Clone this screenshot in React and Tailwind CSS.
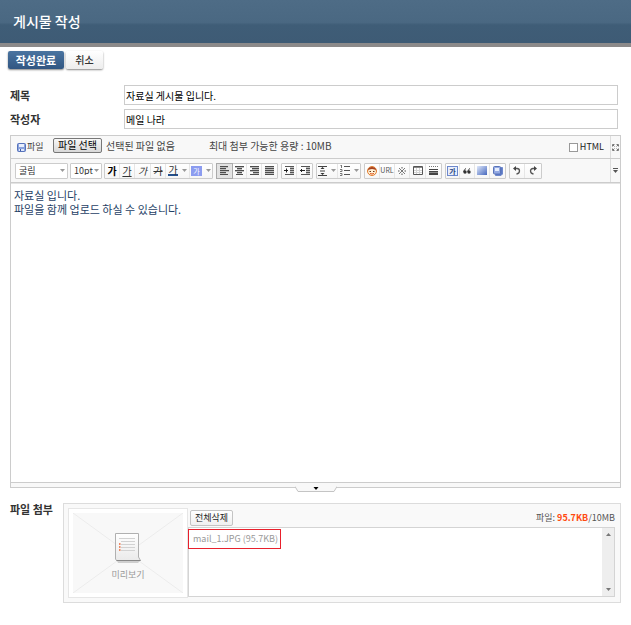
import React from "react";

const bar = (x1, y1, x2, y2, key) => (
  <path key={key} d={`M${x1} ${y1}H${x2}V${y2}H${x1}Z`} />
);

function Icon({ children, w = 12, h = 11 }) {
  return (
    <svg width={w} height={h} viewBox={`0 0 ${w} ${h}`} fill="none" aria-hidden="true" className="shrink-0">
      {children}
    </svg>
  );
}

function AlignIcon({ rows }) {
  return (
    <Icon w={9} h={9}>
      <g fill="#bdbdbd">{rows.slice(0, 4).map(([a, b], i) => bar(a, i * 2 + 1, b, i * 2 + 2, i))}</g>
      <g fill="#4d4d4d">{rows.map(([a, b], i) => bar(a, i * 2, b, i * 2 + 1, i))}</g>
    </Icon>
  );
}

function Caret() {
  return (
    <svg width="5" height="3" viewBox="0 0 5 3" aria-hidden="true" className="shrink-0">
      <path d="M0 0H5L2.5 3Z" fill="#999" />
    </svg>
  );
}

function Group({ children }) {
  return (
    <div className="flex h-4 shrink-0 divide-x divide-[#e6e6e6] rounded-[1px] border border-[#cccccc] bg-linear-to-b from-white to-[#f6f6f6]">
      {children}
    </div>
  );
}

function Tool({ label, width = "w-[15px]", pressed = false, children }) {
  return (
    <button
      type="button"
      aria-label={label}
      aria-pressed={pressed}
      className={`flex shrink-0 items-center justify-center gap-1 text-[10px] leading-none text-[#333] ${width} ${
        pressed ? "bg-[#e2e2e2] outline outline-[#aaa]" : ""
      }`}
    >
      {children}
    </button>
  );
}

function Picker({ label, options, width }) {
  return (
    <div className={`relative h-4 shrink-0 ${width}`}>
      <select
        aria-label={label}
        className="block h-4 w-full appearance-none rounded-[1px] border border-[#cccccc] bg-white pl-[3px] text-[9px] leading-none text-[#333]"
      >
        {options.map((o) => (
          <option key={o}>{o}</option>
        ))}
      </select>
      <span className="pointer-events-none absolute top-1.5 right-[3px]">
        <Caret />
      </span>
    </div>
  );
}

function Field({ id, label, value }) {
  return (
    <div className="flex items-center">
      <label htmlFor={id} className="w-[114px] shrink-0 text-[11px] leading-5 font-bold text-[#333]">
        {label}
      </label>
      <input
        id={id}
        defaultValue={value}
        className="h-5 min-w-0 flex-1 border border-[#cccccc] bg-white px-px text-[10px] text-black"
      />
    </div>
  );
}

function DiskIcon() {
  return (
    <Icon w={9} h={9}>
      <rect x=".5" y=".5" width="8" height="8" rx="1" fill="#8ba3dd" stroke="#5673bb" />
      <path d="M2 1H7V4H2Z" fill="#e9effd" />
      <path d="M2 6H7V8H2Z" fill="#dfe7fa" />
      <path d="M3 6H4V8H3Z" fill="#3f5ba5" />
    </Icon>
  );
}

function Toolbar() {
  return (
    <div className="flex min-w-0 flex-1 items-center gap-[3px] overflow-hidden pl-1">
      <div className="flex gap-0.5">
        <Picker label="글꼴" options={["굴림", "돋움"]} width="w-[53px]" />
        <Picker label="글자 크기" options={["10pt", "12pt"]} width="w-8" />
        <Group>
          <Tool label="굵게">
            <b className="text-black">가</b>
          </Tool>
          <Tool label="밑줄">
            <span className="underline">가</span>
          </Tool>
          <Tool label="기울임" width="w-4">
            <i>가</i>
          </Tool>
          <Tool label="취소선">
            <span className="line-through">가</span>
          </Tool>
          <Tool label="글자색" width="w-6">
            <span className="border-b-2 border-[#24508c] leading-[9px]">가</span>
            <Caret />
          </Tool>
          <Tool label="배경색" width="w-[22px]">
            <span className="bg-[#8c9cf0] px-0.5 text-[7px] leading-[10px] text-white">가</span>
            <Caret />
          </Tool>
        </Group>
      </div>
      <Group>
        <Tool label="왼쪽 정렬" pressed>
          <AlignIcon rows={[[0, 8], [0, 6], [0, 9], [0, 6], [0, 8]]} />
        </Tool>
        <Tool label="가운데 정렬">
          <AlignIcon rows={[[0, 9], [2, 7], [0, 9], [2, 7], [1, 8]]} />
        </Tool>
        <Tool label="오른쪽 정렬">
          <AlignIcon rows={[[0, 9], [2, 9], [0, 9], [3, 9], [0, 9]]} />
        </Tool>
        <Tool label="양쪽 정렬">
          <AlignIcon rows={[[0, 9], [0, 9], [0, 9], [0, 9], [0, 9]]} />
        </Tool>
      </Group>
      <Group>
        <Tool label="들여쓰기">
          <Icon w={10} h={9}>
            <path d="M6 1H10V8H6Z" fill="#bdbdbd" />
            <path d="M1 .5H10M6 2.5H10M6 4.5H10M6 6.5H10M1 8.5H10" stroke="#555" />
            <path d="M0 4.5H4M2.5 2.5V6.5" stroke="#222" />
          </Icon>
        </Tool>
        <Tool label="내어쓰기">
          <Icon w={10} h={9}>
            <path d="M6 1H10V8H6Z" fill="#bdbdbd" />
            <path d="M1 .5H10M6 2.5H10M6 4.5H10M6 6.5H10M1 8.5H10" stroke="#555" />
            <path d="M0 4.5H5M1.5 3V6" stroke="#222" />
          </Icon>
        </Tool>
      </Group>
      <Group>
        <Tool label="줄 간격" width="w-[21px]">
          <Icon w={9} h={10}>
            <path d="M0 .5H9M0 9.5H9M2 5H7" stroke="#444" />
            <path d="M4.5 1L6.5 3H2.5ZM4.5 9L6.5 7H2.5Z" fill="#333" />
          </Icon>
          <Caret />
        </Tool>
        <Tool label="목록" width="w-[22px]">
          <Icon w={10} h={11}>
            <path d="M4 1.5H10M4 5.5H10M4 9.5H10" stroke="#555" />
            <path d="M1.5 0V3M.5 .5H1.5M0 4.5H2V6.5H0M0 8.5H2V10.5H0" stroke="#777" />
          </Icon>
          <Caret />
        </Tool>
      </Group>
      <Group>
        <Tool label="이모티콘">
          <Icon w={10} h={10}>
            <circle cx="5" cy="5" r="4.500" fill="#fff0d4" stroke="#e07a2c" />
            <path d="M1 4.500Q1 1 5 1Q9 1 9 4.500L7.500 3.500L5 3L2.500 3.500Z" fill="#a8431f" />
            <path d="M2.500 5.500H4M6 5.500H7.500" stroke="#6b3313" />
            <path d="M3 7.500Q5 8.500 7 7.500" stroke="#e0561c" />
          </Icon>
        </Tool>
        <Tool label="링크">
          <span className="text-[7px] text-[#555]">URL</span>
        </Tool>
        <Tool label="특수문자">
          <Icon w={8} h={8}>
            <path d="M1 1L7 7M7 1L1 7" stroke="#777" />
            <path d="M3.500 0H4.500V1.500H3.500ZM3.500 6.500H4.500V8H3.500ZM0 3.500H1.500V4.500H0ZM6.500 3.500H8V4.500H6.500Z" fill="#555" />
          </Icon>
        </Tool>
        <Tool label="표" width="w-4">
          <Icon w={10} h={9}>
            <path d="M.5 .5H9.500V8.500H.5Z" fill="#fff" stroke="#555" />
            <path d="M1 1.500H9" stroke="#888" />
            <path d="M3.500 2V8M6.500 2V8M1 4.500H9M1 6.500H9" stroke="#d4d4d4" />
          </Icon>
        </Tool>
        <Tool label="구분선">
          <Icon w={9} h={9}>
            <path d="M0 .5H9" stroke="#777" strokeDasharray="1 1" />
            <path d="M0 3H9V4H0ZM0 5H9V9H0Z" fill="#444" />
            <path d="M0 6.500H9" stroke="#888" />
          </Icon>
        </Tool>
      </Group>
      <Group>
        <Tool label="글상자" width="w-[14px]">
          <span className="border border-[#6d88cc] bg-[#e7eefc] px-px text-[7px] leading-2 font-bold text-[#28447c]">가</span>
        </Tool>
        <Tool label="인용구">
          <Icon w={8} h={6}>
            <circle cx="2" cy="4" r="1.700" fill="#333" />
            <circle cx="6" cy="4" r="1.700" fill="#333" />
            <path d="M.8 4Q.8 1.500 3 .5M4.800 4Q4.800 1.500 7 .5" stroke="#333" />
          </Icon>
        </Tool>
        <Tool label="배경">
          <Icon w={10} h={9}>
            <defs>
              <linearGradient id="sky" x1="0" y1="0" x2="1" y2="1">
                <stop offset="0" stopColor="#dfe8fb" />
                <stop offset="1" stopColor="#4668bd" />
              </linearGradient>
            </defs>
            <rect width="10" height="9" fill="url(#sky)" />
          </Icon>
        </Tool>
        <Tool label="저장">
          <Icon w={10} h={10}>
            <path d="M2.500 1.500H9.500V8L8 9.500H2.500Z" fill="#5b78c4" stroke="#6e88cc" />
            <rect x=".5" y=".5" width="7" height="7.500" rx="1" fill="#93a9e2" stroke="#5873b9" />
            <path d="M2 2H6V5H2Z" fill="#e4ecfd" />
          </Icon>
        </Tool>
      </Group>
      <Group>
        <Tool label="실행 취소">
          <Icon w={8} h={9}>
            <path d="M1.500 2.500H4Q6.500 2.500 6.500 5Q6.500 7.500 3.500 8" stroke="#555" strokeWidth="1.300" />
            <path d="M0 2.500L3 0V5Z" fill="#444" />
          </Icon>
        </Tool>
        <Tool label="다시 실행" width="w-4">
          <Icon w={8} h={9}>
            <path d="M6.500 2.500H4Q1.500 2.500 1.500 5Q1.500 7.500 4.500 8" stroke="#555" strokeWidth="1.300" />
            <path d="M8 2.500L5 0V5Z" fill="#444" />
          </Icon>
        </Tool>
      </Group>
    </div>
  );
}

function Editor() {
  return (
    <section className="mt-1.5">
      <div className="border border-[#cccccc]">
        <div className="flex bg-[#f8f8f8]">
          <div className="flex h-[22px] min-w-0 flex-1 items-center pl-1.5 text-[10px] text-[#444]">
            <DiskIcon />
            <span className="ml-px w-[26px] text-[9px]">파일</span>
            <button
              type="button"
              className="-mt-1 h-[15px] w-[49px] rounded-[2px] border border-[#777] bg-linear-to-b from-[#f8f8f8] to-[#d8d8d8] text-[10px] leading-none text-black"
            >
              파일 선택
            </button>
            <span className="-mt-1 ml-1">선택된 파일 없음</span>
            <span className="-mt-1 ml-[34px]">최대 첨부 가능한 용량 : 10MB</span>
            <label className="mr-1.5 ml-auto flex items-center gap-0.5 text-[9px] text-[#222]">
              <input type="checkbox" className="size-[9px] appearance-none border border-[#999] bg-white" />
              HTML
            </label>
          </div>
          <button
            type="button"
            aria-label="전체 화면"
            className="flex w-[10px] items-center justify-center border-l border-[#dddddd]"
          >
            <Icon w={7} h={7}>
              <path d="M.5 2.500V.5H2.500M4.500 .5H6.500V2.500M6.500 4.500V6.500H4.500M2.500 6.500H.5V4.500M1 1L2.500 2.500M6 1L4.500 2.500M6 6L4.500 4.500M1 6L2.500 4.500" stroke="#777" />
            </Icon>
          </button>
        </div>
        <div className="flex h-[25px] border-t border-b border-[#cccccc] bg-[#f8f8f8]">
          <Toolbar />
          <button
            type="button"
            aria-label="더 보기"
            className="flex w-[10px] items-center justify-center border-l border-[#dddddd]"
          >
            <Icon w={5} h={5}>
              <path d="M0 .5H5" stroke="#555" />
              <path d="M0 2H5L2.500 5Z" fill="#555" />
            </Icon>
          </button>
        </div>
        <textarea
          aria-label="본문"
          defaultValue={"자료실 입니다.\n파일을 함께 업로드 하실 수 있습니다."}
          className="block h-[299px] w-full resize-none border-t border-[#e4e4e4] bg-white px-[3px] py-1 text-[11px] leading-[14px] text-[#1f3f66]"
        />
        <div className="relative h-[5px] border-t border-[#cccccc] bg-[#f8f8f8]">
          <button type="button" aria-label="크기 조절" className="absolute top-[3px] left-1/2 -translate-x-1/2">
            <svg width="42" height="6" viewBox="0 0 42 6" className="block">
              <path d="M0 0L3 5.500H39L42 0Z" fill="#f8f8f8" />
              <path d="M0 .5L3 5.500H39L42 .5" fill="none" stroke="#c4c4c4" />
              <path d="M18.500 1H23.500L21 4Z" fill="#000" />
            </svg>
          </button>
        </div>
      </div>
    </section>
  );
}

function Attachments() {
  return (
    <section className="mt-[15px] flex">
      <h2 className="w-[53px] shrink-0 text-[11px] leading-3 font-bold text-[#333]">파일 첨부</h2>
      <div className="flex min-w-0 flex-1 border border-[#dcdcdc] bg-[#f9f9f9] p-1">
        <div className="h-[90px] w-[120px] shrink-0 border border-[#e6e6e6] bg-white p-1">
          <div className="relative flex h-full flex-col items-center bg-[#f8f8f8] pt-5">
            <svg className="absolute inset-0 size-full" viewBox="0 0 110 80" preserveAspectRatio="none" aria-hidden="true">
              <path d="M0 0L110 80M110 0L0 80" stroke="#ececec" />
            </svg>
            <svg width="26" height="30" viewBox="0 0 26 30" className="relative" aria-hidden="true">
              <defs>
                <linearGradient id="sheet" x1="0" y1="0" x2="0" y2="1">
                  <stop offset="0" stopColor="#ffffff" />
                  <stop offset="1" stopColor="#eaeaea" />
                </linearGradient>
              </defs>
              <path d="M2 28H25L23 30H3Z" fill="#cfcfcf" />
              <path d="M.5 .5H23.500V24L25.500 27.500H1.500L.5 26Z" fill="url(#sheet)" stroke="#b0b0b0" />
              <path d="M4 5.500H20M6 8.500H20M6 11.500H20M6 14.500H20M6 17.500H20" stroke="#d2d2d2" />
              <path d="M4 10H5.500V12H4ZM4 13H5.500V15H4ZM4 16H5.500V18H4Z" fill="#ee8a66" />
              <path d="M1.500 27.500H25.500" stroke="#888" />
            </svg>
            <span className="relative mt-1 text-[9px] leading-4 text-[#999]">미리보기</span>
          </div>
        </div>
        <div className="flex min-w-0 flex-1 flex-col pr-px">
          <div className="flex h-[19px] items-center justify-between pl-0.5">
            <button
              type="button"
              className="h-4 w-[43px] rounded-[2px] border border-[#c4c4c4] bg-linear-to-b from-white to-[#f0f0f0] text-[9px] leading-none text-[#222]"
            >
              전체삭제
            </button>
            <p className="text-[9px] text-[#555]">
              파일: <b className="text-[#ff4a10]">95.7KB</b>/10MB
            </p>
          </div>
          <div className="flex h-[70px] border border-[#d4d4d4] bg-white">
            <ul className="-ml-px min-w-0 flex-1 pt-px">
              <li className="flex h-5 w-[93px] items-center border border-[#e8202c] pl-1 text-[9px] whitespace-nowrap text-[#999]">
                mail_1.JPG (95.7KB)
              </li>
            </ul>
            <div className="flex w-[12px] flex-col items-center justify-between bg-[#eeeeee] py-[5px]">
              <button type="button" aria-label="위로">
                <svg width="5" height="3" viewBox="0 0 5 3" className="block">
                  <path d="M0 3H5L2.500 0Z" fill="#777" />
                </svg>
              </button>
              <button type="button" aria-label="아래로">
                <svg width="5" height="3" viewBox="0 0 5 3" className="block">
                  <path d="M0 0H5L2.500 3Z" fill="#777" />
                </svg>
              </button>
            </div>
          </div>
        </div>
      </div>
    </section>
  );
}

export default function App() {
  return (
    <div className="min-h-screen bg-white font-['Noto_Sans_CJK_KR',sans-serif]">
      <header className="flex h-[47px] items-center border-b-4 border-[#8c8a8a] bg-[linear-gradient(#4e6c86_0%,#4a6882_52%,#3f5d77_58%,#3e5b75_100%)] pl-[13px]">
        <h1 className="text-[14px] font-medium text-white">게시물 작성</h1>
      </header>
      <main className="px-[10px] pt-1">
        <div className="-ml-0.5 flex gap-0.5">
          <button
            type="button"
            className="h-[18px] w-14 rounded-[2px] bg-linear-to-b from-[#4a74a0] to-[#315682] text-[11px] leading-none font-bold text-white shadow-[0_1px_2px_#888]"
          >
            작성완료
          </button>
          <button
            type="button"
            className="h-[18px] w-[37px] rounded-[2px] bg-linear-to-b from-white to-[#ededed] text-[10px] leading-none font-medium text-[#333] shadow-[0_1px_2px_#888]"
          >
            취소
          </button>
        </div>
        <div className="mt-4 mr-[3px] flex flex-col gap-1">
          <Field id="subject" label="제목" value="자료실 게시물 입니다." />
          <Field id="author" label="작성자" value="메일 나라" />
        </div>
        <Editor />
        <Attachments />
      </main>
    </div>
  );
}
